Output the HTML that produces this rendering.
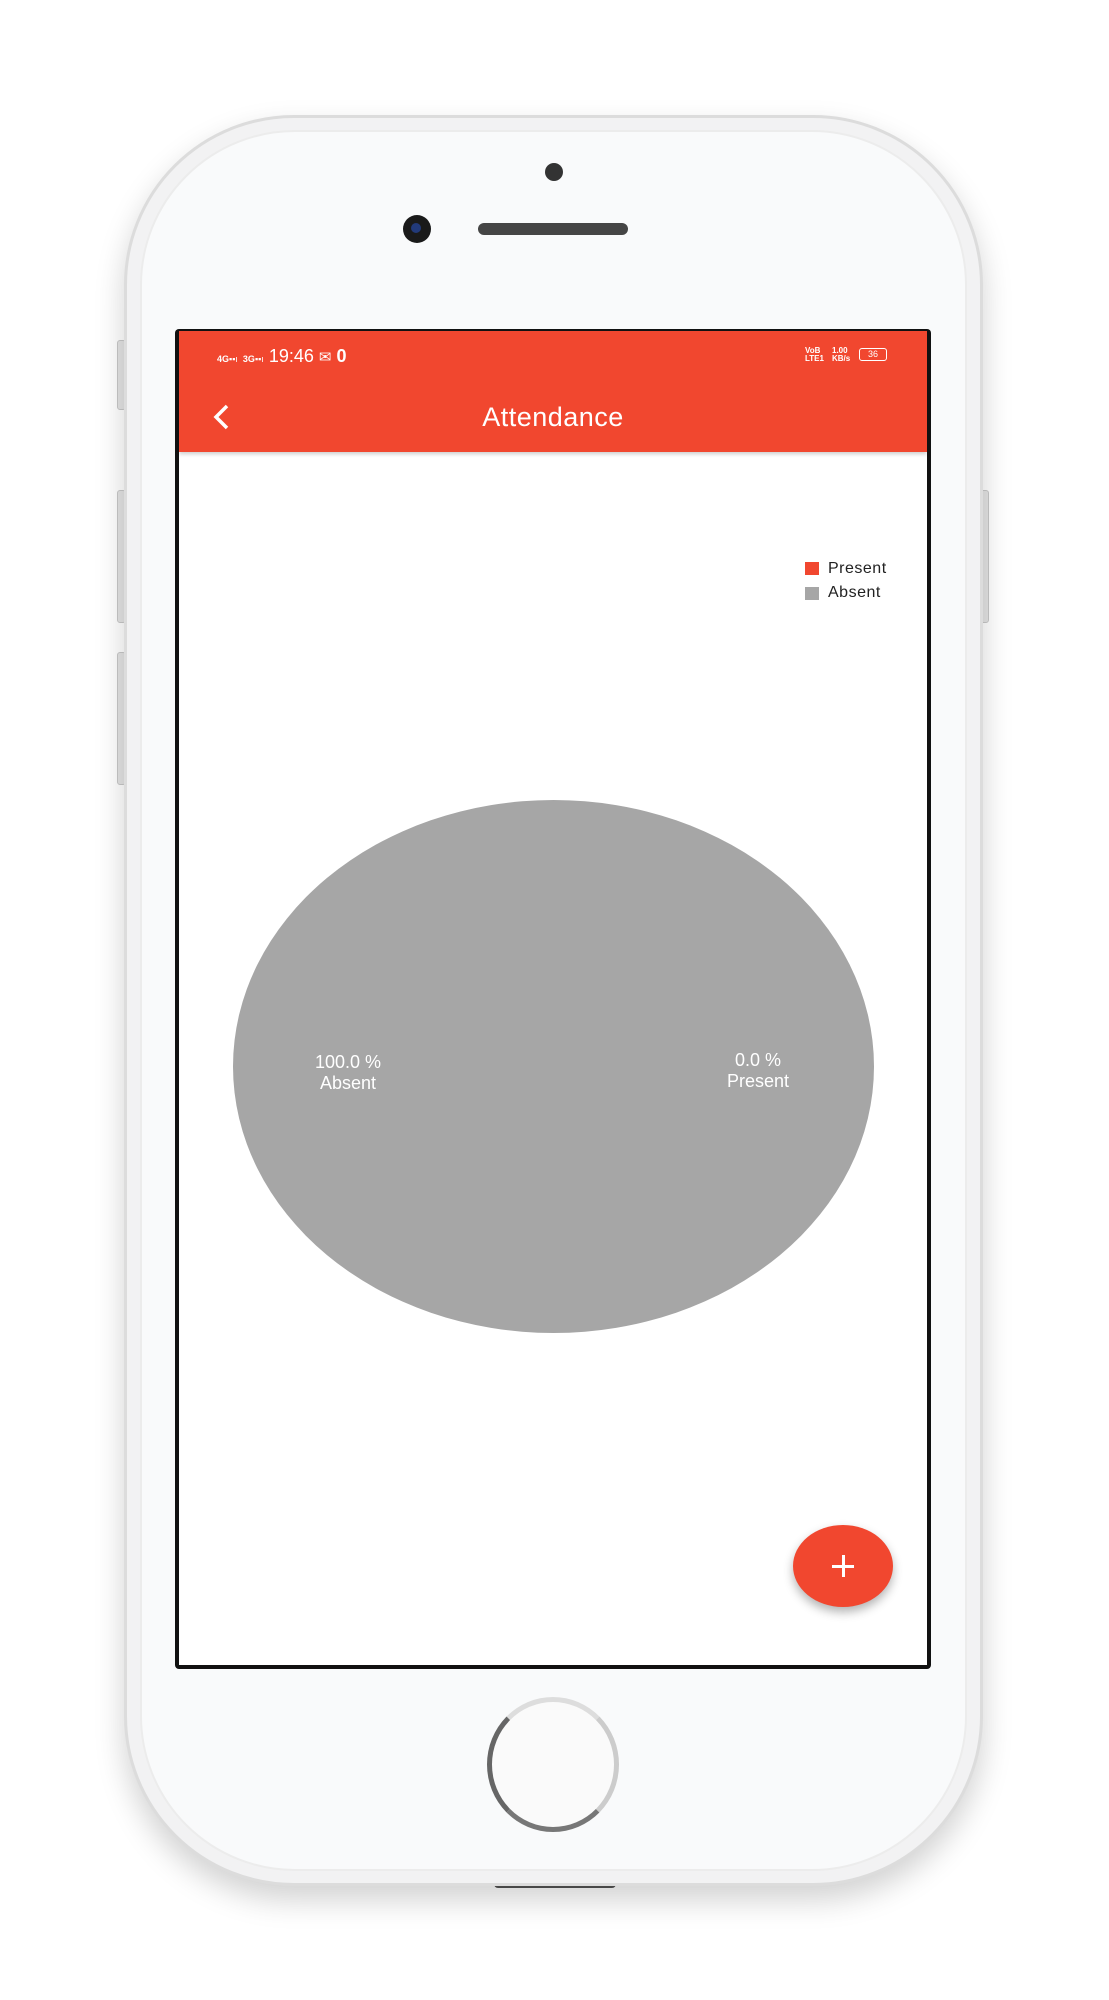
<!DOCTYPE html>
<html><head><meta charset="utf-8"><style>
*{margin:0;padding:0;box-sizing:border-box}
body{width:1109px;height:2000px;background:#fff;position:relative;overflow:hidden;font-family:"Liberation Sans",sans-serif}
.a{position:absolute}
</style></head><body>
<div class="a" style="left:117px;top:340px;width:9px;height:70px;background:#e4e4e4;border:1px solid #c8c8c8;border-radius:3px"></div>
<div class="a" style="left:117px;top:490px;width:9px;height:133px;background:#e4e4e4;border:1px solid #c8c8c8;border-radius:3px"></div>
<div class="a" style="left:117px;top:652px;width:9px;height:133px;background:#e4e4e4;border:1px solid #c8c8c8;border-radius:3px"></div>
<div class="a" style="left:980px;top:490px;width:9px;height:133px;background:#e4e4e4;border:1px solid #c8c8c8;border-radius:3px"></div>
<div class="a" style="left:494px;top:1878px;width:122px;height:10px;background:#555;border-radius:4px"></div>
<div class="a" style="left:124px;top:115px;width:859px;height:1771px;border-radius:170px;background:#f2f2f3;border:3px solid #dcdcdc;box-shadow:0 14px 30px rgba(0,0,0,.18)"></div>
<div class="a" style="left:140px;top:130px;width:827px;height:1741px;border-radius:155px;background:#f9fafb;border:2px solid #ececec"></div>
<div class="a" style="left:545px;top:163px;width:18px;height:18px;border-radius:50%;background:#333"></div>
<div class="a" style="left:403px;top:215px;width:28px;height:28px;border-radius:50%;background:#1a1a1a"><div class="a" style="left:8px;top:8px;width:10px;height:10px;border-radius:50%;background:#223a7a"></div></div>
<div class="a" style="left:478px;top:223px;width:150px;height:12px;border-radius:6px;background:#454545"></div>
<div class="a" style="left:175px;top:329px;width:756px;height:1340px;background:#111;border-radius:4px"></div>
<div class="a" style="left:179px;top:331px;width:748px;height:1334px;background:#fff;overflow:hidden">
  <div class="a" style="left:0;top:0;width:748px;height:121px;background:#f1472f;box-shadow:0 2px 4px rgba(0,0,0,.2)"></div>
  <div class="a" style="left:38px;top:10px;color:#fff;font-size:18px;line-height:30px"><span style="font-size:9px;font-weight:bold">4G</span><span style="font-size:9px">▪▪ı</span> <span style="font-size:9px;font-weight:bold">3G</span><span style="font-size:9px">▪▪ı</span> 19:46 <span style="font-size:15px">✉</span> <b>0</b></div>
  <div class="a" style="left:626px;top:16px;color:#fff;font-size:8px;line-height:8px;font-weight:bold">VoB<br>LTE1</div>
  <div class="a" style="left:653px;top:16px;color:#fff;font-size:8px;line-height:8px;font-weight:bold">1.00<br>KB/s</div>
  <div class="a" style="left:680px;top:17px;width:28px;height:13px;border:1.5px solid #fff;border-radius:3px;color:#fff;font-size:9px;text-align:center;line-height:10px">36</div>
  <svg class="a" style="left:32px;top:72px" width="20" height="28"><path d="M16 3 L5 14 L16 25" stroke="#fff" stroke-width="3.5" fill="none"/></svg>
  <div class="a" style="left:0;top:68px;width:748px;text-align:center;color:#fff;font-size:27px;line-height:36px;letter-spacing:0.5px">Attendance</div>
  <div class="a" style="left:626px;top:231px;width:14px;height:13px;background:#f1472f"></div>
  <div class="a" style="left:649px;top:228px;font-size:16px;color:#222;line-height:20px;letter-spacing:0.5px">Present</div>
  <div class="a" style="left:626px;top:256px;width:14px;height:13px;background:#a6a6a6"></div>
  <div class="a" style="left:649px;top:252px;font-size:16px;color:#222;line-height:20px;letter-spacing:0.5px">Absent</div>
  <div class="a" style="left:54px;top:469px;width:641px;height:533px;border-radius:50%;background:#a6a6a6"></div>
  <div class="a" style="left:109px;top:721px;width:120px;text-align:center;color:#fff;font-size:18px;line-height:21px">100.0 %<br>Absent</div>
  <div class="a" style="left:519px;top:719px;width:120px;text-align:center;color:#fff;font-size:18px;line-height:21px">0.0 %<br>Present</div>
  <div class="a" style="left:614px;top:1194px;width:100px;height:82px;border-radius:50%;background:#f1472f;box-shadow:0 5px 10px rgba(0,0,0,.3)"></div>
  <div class="a" style="left:653px;top:1234px;width:22px;height:3px;background:#fff"></div>
  <div class="a" style="left:662.5px;top:1224px;width:3px;height:22px;background:#fff"></div>
</div>
<div class="a" style="left:487px;top:1697px;width:132px;height:135px;border-radius:50%;border:5px solid #9a9a9a;border-top-color:#ddd;border-left-color:#666;border-bottom-color:#777;border-right-color:#ccc;background:#fafafa"></div>
</body></html>
